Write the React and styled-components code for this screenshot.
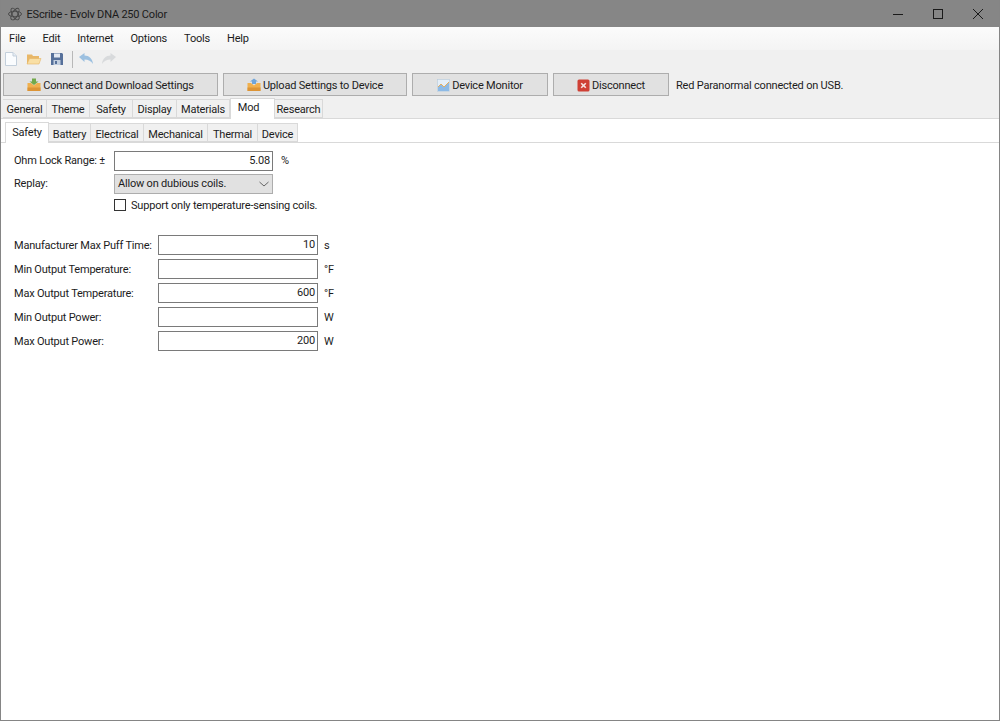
import React from 'react'
import styled, { createGlobalStyle } from 'styled-components'

const Global = createGlobalStyle`
  html, body { margin: 0; padding: 0; background: #fff; }
  body { font-family: Roboto, "Noto Sans", sans-serif; font-size: 11px; letter-spacing: -0.2px; color: #1c1c1c; }
`

const Win = styled.div`
  box-sizing: border-box;
  width: 1000px;
  height: 721px;
  border: solid #858585;
  border-width: 0 1.5px 1.5px 1.5px;
  background: #fff;
  display: flex;
  flex-direction: column;
  overflow: hidden;
`
const TitleBar = styled.div`
  height: 27px;
  flex: none;
  margin: 0 -1.5px;
  background: #868686;
  display: flex;
  align-items: center;
  padding: 0 3px 0 7px;
  gap: 4px;
  color: #1a1a1a;
`
const TitleText = styled.span`
  flex: 1;
  padding-top: 2px;
`
const WinBtn = styled.div`
  width: 40px;
  height: 27px;
  margin-left: -4px;
  display: flex;
  align-items: center;
  justify-content: center;
`
const MenuBar = styled.div`
  box-sizing: border-box;
  height: 23px;
  flex: none;
  background: linear-gradient(#fbfbfb, #f4f4f4);
  display: flex;
  align-items: center;
  padding: 0 0 0 8px;
  gap: 17px;
`
const ToolBar = styled.div`
  box-sizing: border-box;
  height: 20px;
  flex: none;
  background: #f0f0f0;
  display: flex;
  align-items: center;
  padding: 0 0 2px 2px;
  gap: 7px;
`
const ToolSep = styled.div`
  width: 1px;
  height: 17px;
  background: #b8b8b8;
  margin-right: -2px;
`
const ActionBar = styled.div`
  box-sizing: border-box;
  height: 29px;
  flex: none;
  background: #f0f0f0;
  display: flex;
  align-items: flex-start;
  padding: 3px 0 0 2px;
  gap: 5px;
`
const ActionButton = styled.button`
  box-sizing: border-box;
  width: ${p => p.$w}px;
  height: 23px;
  border: 1px solid #adadad;
  background: #e1e1e1;
  color: #1c1c1c;
  font: inherit;
  letter-spacing: inherit;
  padding: 1px 0 0;
  display: flex;
  align-items: center;
  justify-content: center;
  gap: 2px;
`
const Status = styled.span`
  margin: 6px 0 0 2px;
`
const TabStrip = styled.div`
  flex: none;
  height: ${p => p.$h}px;
  background: ${p => p.$bg};
  border-bottom: 1px solid #d9d9d9;
  box-sizing: border-box;
  display: flex;
  align-items: flex-end;
  padding-left: ${p => p.$pl}px;
`
const Tab = styled.div`
  box-sizing: border-box;
  width: ${p => p.$w}px;
  height: ${p => (p.$active ? 21 : 19)}px;
  margin-bottom: ${p => (p.$active ? -1 : 0)}px;
  background: ${p => (p.$active ? '#fff' : '#f0f0f0')};
  border: 1px solid #d9d9d9;
  border-left-width: ${p => (p.$active ? 1 : 0)}px;
  border-bottom: ${p => (p.$active ? 'none' : '1px solid #d9d9d9')};
  display: flex;
  justify-content: center;
  padding-top: ${p => (p.$active ? p.$top - 1 : p.$top)}px;
  padding-right: ${p => p.$pr || 0}px;
`
const Form = styled.div`
  flex: 1;
  background: #fff;
  padding: 6px 0 0 13px;
`
const Row = styled.div`
  display: flex;
  align-items: center;
  height: ${p => p.$h || 24}px;
`
const Label = styled.span`
  width: ${p => p.$w}px;
  flex: none;
`
const Field = styled.div`
  box-sizing: border-box;
  width: ${p => p.$w}px;
  height: 20px;
  flex: none;
  border: 1px solid #7a7a7a;
  background: #fff;
  text-align: right;
  padding: 1px 2px 0 0;
  line-height: 15px;
`
const Unit = styled.span`
  margin-left: ${p => p.$ml || 6}px;
`
const Select = styled.div`
  box-sizing: border-box;
  width: 159px;
  height: 20px;
  flex: none;
  border: 1px solid #adadad;
  background: #e1e1e1;
  display: flex;
  align-items: center;
  justify-content: space-between;
  padding: 0 2px 0 3px;
`
const CheckBox = styled.div`
  box-sizing: border-box;
  width: 12px;
  height: 12px;
  flex: none;
  border: 1px solid #333;
  background: #fff;
  margin-right: 5px;
`
const Group = styled.div`
  margin-top: ${p => p.$mt}px;
`

const AppIcon = () => (
  <svg width="16" height="16" viewBox="0 0 16 16" fill="none" stroke="#444" strokeWidth="0.9">
    <ellipse cx="8" cy="8" rx="6.5" ry="2.8" />
    <ellipse cx="8" cy="8" rx="6.5" ry="2.8" transform="rotate(60 8 8)" />
    <ellipse cx="8" cy="8" rx="6.5" ry="2.8" transform="rotate(120 8 8)" />
  </svg>
)
const MinIcon = () => (
  <svg width="10" height="10" viewBox="0 0 10 10"><path d="M0 5.5H10" stroke="#1a1a1a" /></svg>
)
const MaxIcon = () => (
  <svg width="10" height="10" viewBox="0 0 10 10"><rect x="0.5" y="0.5" width="9" height="9" fill="none" stroke="#1a1a1a" /></svg>
)
const CloseIcon = () => (
  <svg width="10" height="10" viewBox="0 0 10 10"><path d="M0 0L10 10M10 0L0 10" stroke="#1a1a1a" /></svg>
)
const NewIcon = () => (
  <svg width="16" height="16" viewBox="0 0 16 16">
    <path d="M2.5 1.5H10L13.5 5V14.5H2.5Z" fill="#fafcfe" stroke="#c3cfdb" />
    <path d="M10 1.5V5H13.5" fill="#e6edf4" stroke="#c3cfdb" />
  </svg>
)
const OpenIcon = () => (
  <svg width="16" height="16" viewBox="0 0 16 16">
    <path d="M1 3.5H6L7 5H13V13H1Z" fill="#e8b768" />
    <path d="M1 13L3.5 7.5H15L13 13Z" fill="#f9dfa4" stroke="#e6b567" strokeWidth="0.6" />
  </svg>
)
const SaveIcon = () => (
  <svg width="16" height="16" viewBox="0 0 16 16">
    <path d="M2 2H13L14 3V14H2Z" fill="#56709a" />
    <rect x="5" y="2.5" width="6" height="4" fill="#e3e9f2" />
    <rect x="4.5" y="9" width="7" height="5" fill="#c3cfdf" />
    <rect x="6" y="10" width="2" height="3" fill="#56709a" />
  </svg>
)
const UndoIcon = ({ flip, color }) => (
  <svg width="16" height="16" viewBox="0 0 16 16" style={flip ? { transform: 'scaleX(-1)' } : undefined}>
    <path d="M1 6L6.5 2V4.5C11 4.5 14.5 7.5 15 13C13 10 10.5 8.5 6.5 8.5V11Z" fill={color} />
  </svg>
)
const BoxIcon = () => (
  <svg width="14" height="14" viewBox="0 0 14 14">
    <path d="M0.5 5H4L7 7.5L10 5H13.5V13H0.5Z" fill="#f0b04e" />
    <path d="M0.5 9.5H13.5V13H0.5Z" fill="#dc9436" />
    <path d="M5 0.5H9V3.5H11.5L7 7L2.5 3.5H5Z" fill="#72a94a" />
  </svg>
)
const BoxUpIcon = () => (
  <svg width="14" height="14" viewBox="0 0 14 14">
    <path d="M0.5 5H4L7 7.5L10 5H13.5V13H0.5Z" fill="#f0b04e" />
    <path d="M0.5 9.5H13.5V13H0.5Z" fill="#dc9436" />
    <path d="M7 0.5L11 3.5H9V6H5V3.5H3Z" fill="#6fa5da" />
  </svg>
)
const ChartIcon = () => (
  <svg width="13" height="13" viewBox="0 0 13 13">
    <rect x="0.5" y="0.5" width="12" height="12" fill="#e4eef8" stroke="#b8cbdd" strokeWidth="0.6" />
    <path d="M1 12V8L4 5L7 8L12 3V12Z" fill="#8dbae6" />
    <path d="M1 8L4 5L7 8L12 3" fill="none" stroke="#e8ae5a" />
  </svg>
)
const StopIcon = () => (
  <svg width="13" height="13" viewBox="0 0 13 13">
    <rect x="0.5" y="0.5" width="12" height="12" rx="1.5" fill="#cf4035" />
    <path d="M4.2 4.2L8.8 8.8M8.8 4.2L4.2 8.8" stroke="#f6e4e2" strokeWidth="1.6" />
  </svg>
)
const Chevron = () => (
  <svg width="12" height="6" viewBox="0 0 12 6"><path d="M1.5 1L6 5L10.5 1" fill="none" stroke="#666" /></svg>
)

const mainTabs = [
  ['General', 44], ['Theme', 43], ['Safety', 43], ['Display', 44], ['Materials', 53],
  ['Mod', 45, true, 8], ['Research', 48],
]
const subTabs = [
  ['Safety', 44, true], ['Battery', 42], ['Electrical', 53], ['Mechanical', 64],
  ['Thermal', 50], ['Device', 40],
]
const limits = [
  ['Manufacturer Max Puff Time:', '10', 's'],
  ['Min Output Temperature:', '', '°F'],
  ['Max Output Temperature:', '600', '°F'],
  ['Min Output Power:', '', 'W'],
  ['Max Output Power:', '200', 'W'],
]

export default function App() {
  return (
    <Win>
      <Global />
      <TitleBar>
        <AppIcon />
        <TitleText>EScribe - Evolv DNA 250 Color</TitleText>
        <WinBtn><MinIcon /></WinBtn>
        <WinBtn><MaxIcon /></WinBtn>
        <WinBtn><CloseIcon /></WinBtn>
      </TitleBar>
      <MenuBar>
        <span>File</span><span>Edit</span><span>Internet</span>
        <span>Options</span><span>Tools</span><span>Help</span>
      </MenuBar>
      <ToolBar>
        <NewIcon /><OpenIcon /><SaveIcon />
        <ToolSep />
        <UndoIcon color="#9cc0e0" />
        <UndoIcon flip color="#d8dadc" />
      </ToolBar>
      <ActionBar>
        <ActionButton $w={215}><BoxIcon />Connect and Download Settings</ActionButton>
        <ActionButton $w={184}><BoxUpIcon />Upload Settings to Device</ActionButton>
        <ActionButton $w={136}><ChartIcon />Device Monitor</ActionButton>
        <ActionButton $w={116}><StopIcon />Disconnect</ActionButton>
        <Status>Red Paranormal connected on USB.</Status>
      </ActionBar>
      <TabStrip $h={20} $bg="#f0f0f0" $pl={2}>
        {mainTabs.map(([t, w, a, pr]) => <Tab key={t} $w={w} $active={a} $pr={pr} $top={3}>{t}</Tab>)}
      </TabStrip>
      <TabStrip $h={24} $bg="#fff" $pl={4}>
        {subTabs.map(([t, w, a]) => <Tab key={t} $w={w} $active={a} $top={a ? 4 : 4}>{t}</Tab>)}
      </TabStrip>
      <Form>
        <Row $h={23}>
          <Label $w={100}>Ohm Lock Range: ±</Label>
          <Field $w={159}>5.08</Field>
          <Unit $ml={8}>%</Unit>
        </Row>
        <Row $h={23}>
          <Label $w={100}>Replay:</Label>
          <Select>Allow on dubious coils.<Chevron /></Select>
        </Row>
        <Row $h={20}>
          <Label $w={100} />
          <CheckBox />
          Support only temperature-sensing coils.
        </Row>
        <Group $mt={18}>
          {limits.map(([l, v, u]) => (
            <Row key={l}>
              <Label $w={144}>{l}</Label>
              <Field $w={160}>{v}</Field>
              <Unit>{u}</Unit>
            </Row>
          ))}
        </Group>
      </Form>
    </Win>
  )
}
